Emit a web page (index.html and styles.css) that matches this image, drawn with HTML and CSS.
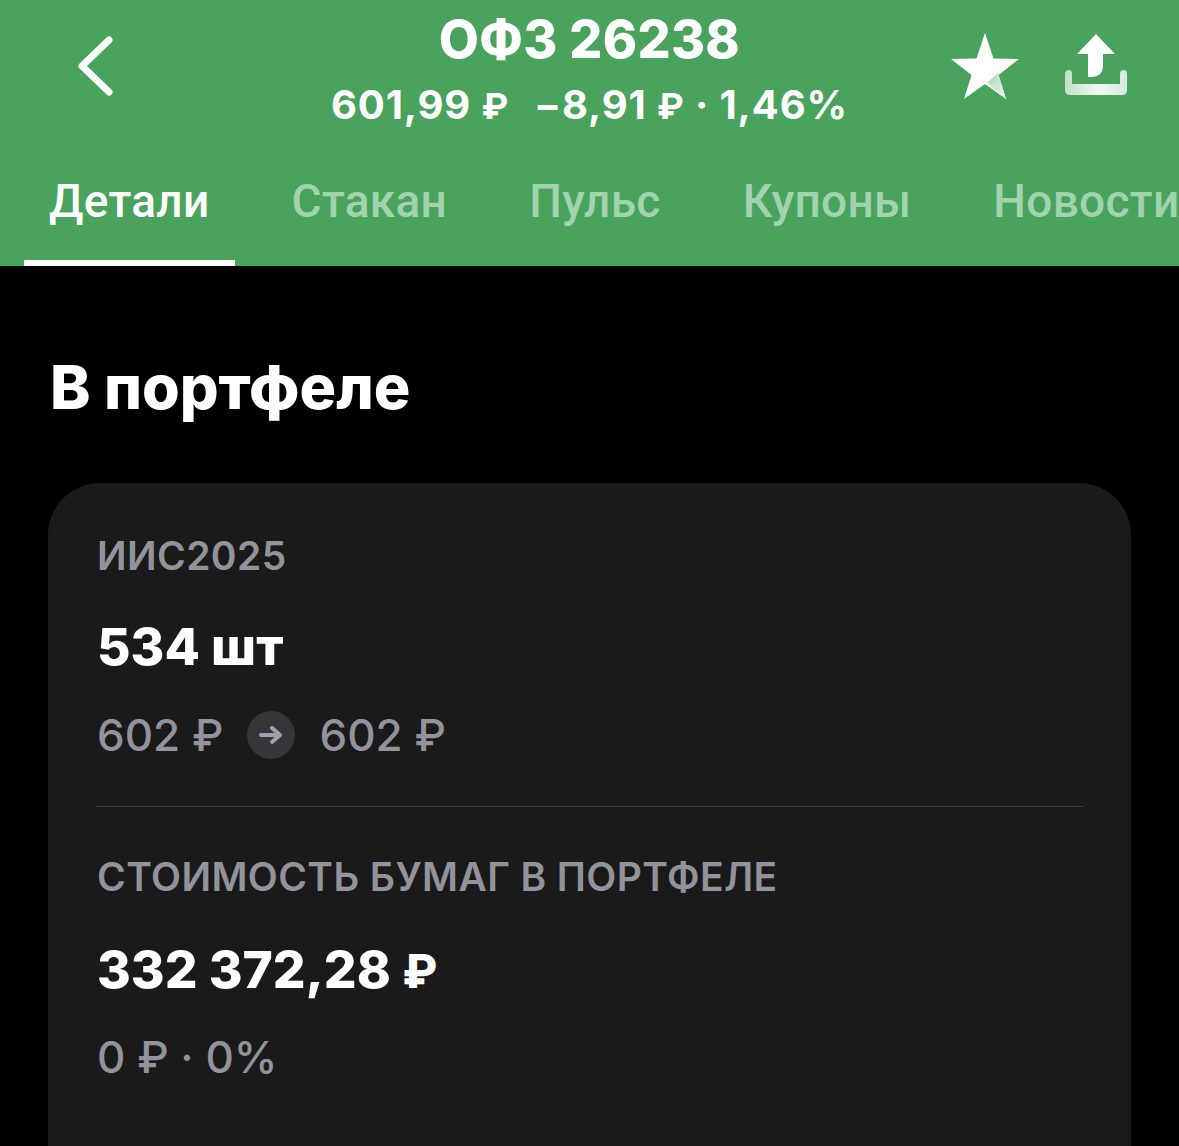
FILE: index.html
```html
<!DOCTYPE html>
<html lang="ru">
<head>
<meta charset="utf-8">
<title>ОФЗ 26238</title>
<link rel="stylesheet" href="styles.css">
</head>
<body>
<div class="screen">
  <header class="header">
    <div class="topbar">
      <svg class="back" viewBox="0 0 38 62" width="38" height="62"><path d="M33 5 L6 31 L33 57" fill="none" stroke="#fff" stroke-width="7" stroke-linecap="round" stroke-linejoin="round"/></svg>
      <div class="titles">
        <div class="title">ОФЗ 26238</div>
        <div class="subtitle"><span>601,99 <span class="rub">₽</span></span><span>−8,91 <span class="rub">₽</span> · 1,46%</span></div>
      </div>
      <div class="actions">
        <svg class="star" viewBox="0 0 68 66" width="68" height="66">
          <defs>
            <linearGradient id="starShade" x1="0" y1="0" x2="1" y2="1">
              <stop offset="0" stop-color="#a9d5b6"/>
              <stop offset="1" stop-color="#eef7f0"/>
            </linearGradient>
          </defs>
          <path d="M34 0 L42.500 25.500 L68 26 L47.500 42 L55 66 L34 51 L13 66 L20.500 42 L0 26 L25.500 25.500 Z" fill="#fff"/>
          <path d="M36 49.500 L55 66 L47 40 Z" fill="url(#starShade)"/>
        </svg>
        <svg class="share" viewBox="0 0 64 64" width="64" height="64">
          <defs>
            <linearGradient id="trayShade" x1="0" y1="0" x2="1" y2="0">
              <stop offset="0" stop-color="#c3e0cc"/>
              <stop offset="0.550" stop-color="#f0f8f2"/>
              <stop offset="1" stop-color="#d3e9da"/>
            </linearGradient>
          </defs>
          <path d="M32 1 L51 21 L39 21 L39 32 Q39 44 27 44 L24 44 L24 21 L13 21 Z" fill="#fff"/>
          <path d="M1 41 Q1 37 5 37 Q8 37 8 41 L8 51 L56 51 L56 41 Q56 37 60 37 Q63 37 63 41 L63 57 Q63 62 58 62 L6 62 Q1 62 1 57 Z" fill="url(#trayShade)"/>
        </svg>
      </div>
    </div>
    <nav class="tabs">
      <div class="tab active">Детали</div>
      <div class="tab">Стакан</div>
      <div class="tab">Пульс</div>
      <div class="tab">Купоны</div>
      <div class="tab">Новости</div>
    </nav>
  </header>
  <main class="content">
    <h1 class="heading">В портфеле</h1>
    <section class="card">
      <div class="label">ИИС2025</div>
      <div class="value">534 шт</div>
      <div class="muted prices">
        <span>602 ₽</span>
        <span class="arrow"><svg viewBox="0 0 24 20" width="24" height="20"><path d="M2 10 H21 M13 3 L21 10 L13 17" fill="none" stroke="#a0a3ad" stroke-width="4" stroke-linecap="round" stroke-linejoin="round"/></svg></span>
        <span>602 ₽</span>
      </div>
      <div class="divider"></div>
      <div class="label">СТОИМОСТЬ БУМАГ В ПОРТФЕЛЕ</div>
      <div class="value value-total">332 372,28 <span class="rub-value">₽</span></div>
      <div class="muted">0 ₽ · 0%</div>
    </section>
  </main>
</div>
</body>
</html>
```
FILE: styles.css
```css
* { box-sizing: border-box; margin: 0; padding: 0; }
html, body { background: #000; }
body { font-family: Inter, "Noto Sans", sans-serif; color: #fff; overflow: hidden; }
.screen { width: 1179px; height: 1146px; overflow: hidden; }
.header { height: 266px; background: #4aa35d; display: flex; flex-direction: column; overflow: hidden; }
.topbar { display: flex; height: 145px; position: relative; justify-content: center; padding-top: 12px; }
.back { position: absolute; left: 76px; top: 35px; }
.titles { display: flex; flex-direction: column; align-items: center; }
.title { font-size: 52px; line-height: 56px; font-weight: 800; letter-spacing: 0.3px; }
.subtitle { font-size: 40px; line-height: 46px; font-weight: 700; margin-top: 14px; display: flex; gap: 25px; letter-spacing: 0.85px; }
.rub { font-size: 36px; }
.actions { position: absolute; left: 951px; top: 33px; display: flex; gap: 45px; align-items: flex-start; }
.tabs { display: flex; width: 1300px; padding-left: 24px; gap: 32px; height: 121px; }
.tab { flex: none; padding: 28px 25px 0; font-family: Roboto, sans-serif; font-size: 46px; letter-spacing: 0.3px; line-height: 56px; font-weight: 500; color: #a0d3ae; border-bottom: 6px solid transparent; height: 121px; }
.tab.active { color: #fff; border-bottom-color: #fff; }
.content { padding: 0 48px; }
.heading { font-size: 61px; line-height: 68px; font-weight: 800; margin: 87px 0 0 2px; }
.card { margin-top: 62px; height: 800px; background: #1a1a1a; border-radius: 52px; padding: 50px 48px 48px 49px; }
.label { font-size: 39px; line-height: 46px; font-weight: 600; color: #92939b; letter-spacing: 0.4px; }
.value { font-size: 51.500px; line-height: 60px; font-weight: 800; margin-top: 37px; }
.value-total { margin-top: 39px; }
.rub-value { font-size: 46px; }
.muted { font-size: 44px; line-height: 54px; font-weight: 500; color: #92939b; margin-top: 29px; }
.prices { display: flex; align-items: center; gap: 24px; margin-top: 32px; }
.arrow { width: 48px; height: 48px; border-radius: 50%; background: #35363a; display: flex; align-items: center; justify-content: center; }
.divider { height: 1px; background: #3d3d3f; margin: 44px 0 47px -1px; }
```
